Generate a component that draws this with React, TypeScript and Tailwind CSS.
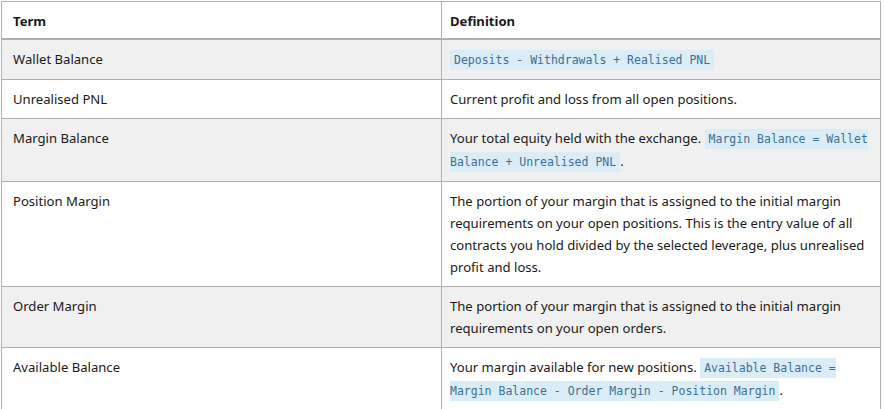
import React from "react";

const code = "bg-[#daedf7] text-[#3e6f94] px-[4px] py-[3px] text-[11.5px] leading-[21px] [font-family:'DejaVu_Sans_Mono',monospace]";

function Code({ children }: { children: React.ReactNode }) {
  return <code className={code}>{children}</code>;
}

const rows: { term: string; def: React.ReactNode }[] = [
  {
    term: "Wallet Balance",
    def: <Code>Deposits - Withdrawals + Realised PNL</Code>,
  },
  {
    term: "Unrealised PNL",
    def: "Current profit and loss from all open positions.",
  },
  {
    term: "Margin Balance",
    def: (
      <>
        Your total equity held with the exchange.{" "}
        <Code>Margin Balance = Wallet Balance + Unrealised PNL</Code>.
      </>
    ),
  },
  {
    term: "Position Margin",
    def: "The portion of your margin that is assigned to the initial margin requirements on your open positions. This is the entry value of all contracts you hold divided by the selected leverage, plus unrealised profit and loss.",
  },
  {
    term: "Order Margin",
    def: "The portion of your margin that is assigned to the initial margin requirements on your open orders.",
  },
  {
    term: "Available Balance",
    def: (
      <>
        Your margin available for new positions.{" "}
        <Code>Available Balance = Margin Balance - Order Margin - Position Margin</Code>.
      </>
    ),
  },
];

export default function App() {
  return (
    <div className="bg-white pl-px pt-px min-h-[409px] text-[13.1px] leading-[22px] text-[#1a1a1a] [font-family:'Noto_Sans',sans-serif]">
      <table className="w-[880px] border-collapse table-fixed">
        <colgroup>
          <col className="w-[440px]" />
          <col />
        </colgroup>
        <thead>
          <tr>
            <th className="border border-[#b0b0b0] border-b-2 text-left font-bold px-[11px] pt-[8px] pb-[6px]">Term</th>
            <th className="border border-[#b0b0b0] border-b-2 text-left font-bold px-[8px] pt-[8px] pb-[6px]">Definition</th>
          </tr>
        </thead>
        <tbody>
          {rows.map((r, i) => (
            <tr key={r.term} className={i % 2 === 0 ? "bg-[#f0f0f0]" : "bg-white"}>
              <td className="border border-[#b0b0b0] align-top px-[11px] py-[8px]">{r.term}</td>
              <td className="border border-[#b0b0b0] align-top px-[8px] py-[8px]">{r.def}</td>
            </tr>
          ))}
        </tbody>
      </table>
    </div>
  );
}
